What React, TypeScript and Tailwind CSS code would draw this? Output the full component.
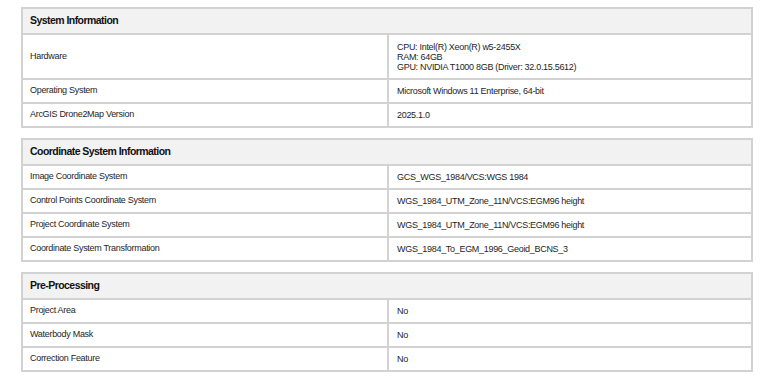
import React from 'react';

type Row = { label: string; value: string[] };
type Section = { title: string; rows: Row[] };

const sections: Section[] = [
  {
    title: 'System Information',
    rows: [
      {
        label: 'Hardware',
        value: ['CPU: Intel(R) Xeon(R) w5-2455X', 'RAM: 64GB', 'GPU: NVIDIA T1000 8GB (Driver: 32.0.15.5612)'],
      },
      { label: 'Operating System', value: ['Microsoft Windows 11 Enterprise, 64-bit'] },
      { label: 'ArcGIS Drone2Map Version', value: ['2025.1.0'] },
    ],
  },
  {
    title: 'Coordinate System Information',
    rows: [
      { label: 'Image Coordinate System', value: ['GCS_WGS_1984/VCS:WGS 1984'] },
      { label: 'Control Points Coordinate System', value: ['WGS_1984_UTM_Zone_11N/VCS:EGM96 height'] },
      { label: 'Project Coordinate System', value: ['WGS_1984_UTM_Zone_11N/VCS:EGM96 height'] },
      { label: 'Coordinate System Transformation', value: ['WGS_1984_To_EGM_1996_Geoid_BCNS_3'] },
    ],
  },
  {
    title: 'Pre-Processing',
    rows: [
      { label: 'Project Area', value: ['No'] },
      { label: 'Waterbody Mask', value: ['No'] },
      { label: 'Correction Feature', value: ['No'] },
    ],
  },
];

const InfoTable: React.FC<{ section: Section }> = ({ section }) => (
  <div className="border-2 border-[#d2d2d2] bg-white">
    <div className="h-[24px] flex items-center px-[7px] bg-[#f2f2f2] text-[10.5px] font-bold text-[#111] tracking-[-0.55px]">
      {section.title}
    </div>
    {section.rows.map(row => (
      <div
        key={row.label}
        className={`grid grid-cols-2 border-t-2 border-[#d2d2d2] ${row.value.length > 1 ? 'h-[45px]' : 'h-[24px]'}`}
      >
        <div className="flex items-center px-[7px] text-[#1e1e1e]">{row.label}</div>
        <div className="flex flex-col justify-center border-l-2 border-[#d2d2d2] px-[8px] text-[#1e1e1e] leading-[10px]">
          {row.value.map(v => (
            <span key={v}>{v}</span>
          ))}
        </div>
      </div>
    ))}
  </div>
);

export default function App() {
  return (
    <div
      className="w-[768px] h-[379px] bg-white pl-[21px] pr-[15px] pt-[7px] flex flex-col gap-[10px] text-[9px] tracking-[-0.3px] overflow-hidden"
      style={{ fontFamily: '"Liberation Sans", Arial, sans-serif' }}
    >
      {sections.map(s => (
        <InfoTable key={s.title} section={s} />
      ))}
    </div>
  );
}
